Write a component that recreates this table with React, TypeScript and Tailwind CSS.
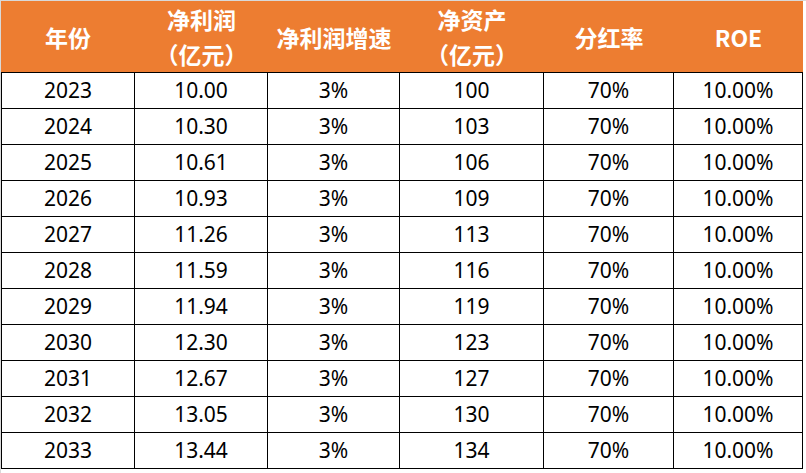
import React from "react";

const widths = ["w-[134px] border-l", "w-[133px]", "w-[132px]", "w-[144px]", "w-[130px]", "w-[129px]"];
const headW = ["w-[134px]", "w-[133px]", "w-[132px]", "w-[144px]", "w-[130px]", "w-[129px]"];

const rows: string[][] = [
  ["2023", "10.00", "3%", "100", "70%", "10.00%"],
  ["2024", "10.30", "3%", "103", "70%", "10.00%"],
  ["2025", "10.61", "3%", "106", "70%", "10.00%"],
  ["2026", "10.93", "3%", "109", "70%", "10.00%"],
  ["2027", "11.26", "3%", "113", "70%", "10.00%"],
  ["2028", "11.59", "3%", "116", "70%", "10.00%"],
  ["2029", "11.94", "3%", "119", "70%", "10.00%"],
  ["2030", "12.30", "3%", "123", "70%", "10.00%"],
  ["2031", "12.67", "3%", "127", "70%", "10.00%"],
  ["2032", "13.05", "3%", "130", "70%", "10.00%"],
  ["2033", "13.44", "3%", "134", "70%", "10.00%"],
];

const headers: string[][] = [
  ["年份"],
  ["净利润", "（亿元）"],
  ["净利润增速"],
  ["净资产", "（亿元）"],
  ["分红率"],
  ["ROE"],
];

export default function App() {
  return (
    <div className="w-[806px] h-[473px] bg-white overflow-hidden">
      <div className="border-t border-l border-[#d9d9d9] w-[806px] h-[473px]">
        <div className="flex h-[72px] w-[802px] bg-[#ED7D31] border-b border-black">
          {headers.map((h, i) => (
            <div
              key={i}
              className={`${headW[i]} h-full flex flex-col items-center justify-center text-white font-bold text-[23px] leading-[35px] pt-[1px]`}
              style={{ fontFamily: '"Noto Sans CJK SC", "Noto Sans", sans-serif' }}
            >
              {h.map((line, j) => (
                <div key={j}>{line}</div>
              ))}
            </div>
          ))}
        </div>
        {rows.map((r, ri) => (
          <div key={ri} className="flex h-[36px]">
            {r.map((c, ci) => (
              <div
                key={ci}
                className={`${widths[ci]} h-full border-r border-b border-black flex items-center justify-center text-black text-[21px] pt-[1px]`}
                style={{ fontFamily: '"Noto Sans", "Noto Sans CJK SC", sans-serif' }}
              >
                {c}
              </div>
            ))}
          </div>
        ))}
      </div>
    </div>
  );
}
